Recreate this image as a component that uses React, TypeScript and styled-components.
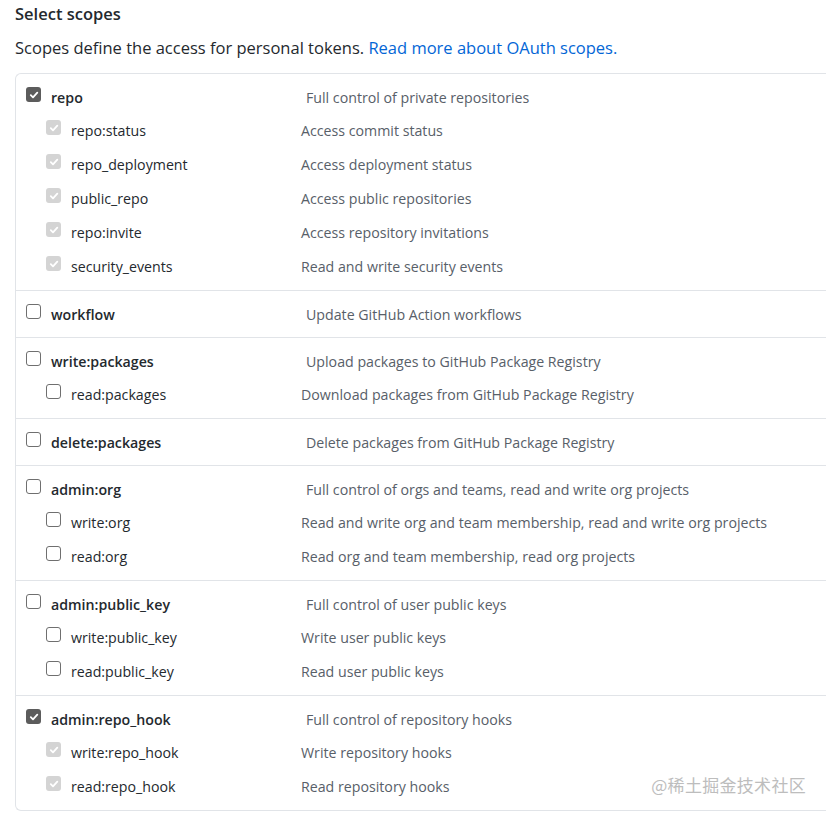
import React from "react";
import styled, { createGlobalStyle } from "styled-components";

const Global = createGlobalStyle`
  html, body { margin: 0; padding: 0; background: #fff; }
  body { font-family: "Open Sans", "Noto Sans", "Noto Sans CJK SC", sans-serif; color: #24292e; }
`;

const Page = styled.div`
  position: relative;
  width: 826px;
  height: 816px;
  overflow: hidden;
  padding-left: 15px;
  box-sizing: border-box;
`;

const Heading = styled.h3`
  margin: 0;
  padding-top: 2px;
  height: 26px;
  font-size: 16.5px;
  font-weight: 600;
  line-height: 24px;
  color: #24292e;
`;

const Intro = styled.p`
  margin: 0;
  height: 45px;
  line-height: 40px;
  font-size: 16.5px;
  color: #24292e;
  white-space: nowrap;
`;

const Link = styled.a`
  color: #0366d6;
  text-decoration: none;
`;

const Box = styled.div`
  border: 1px solid #e1e4e8;
  border-right: none;
  border-top-left-radius: 6px;
  border-bottom-left-radius: 6px;
  width: 830px;
`;

const Group = styled.div`
  padding: 6px 0;
  border-top: 1px solid #e1e4e8;
  &:first-child { border-top: none; }
`;

const Row = styled.div<{ $child?: boolean }>`
  display: grid;
  grid-template-columns: 14px ${(p) => (p.$child ? 219 : 244)}px 1fr;
  column-gap: 11px;
  align-items: center;
  height: 34px;
  padding-left: ${(p) => (p.$child ? 30 : 10)}px;
  padding-bottom: ${(p) => (p.$child ? 2 : 0)}px;
  box-sizing: border-box;
  font-size: 14.2px;
`;

const Box14 = styled.span<{ $state: "on" | "off" | "dim" }>`
  width: 15px;
  height: 15px;
  box-sizing: border-box;
  border-radius: 3px;
  margin-top: -5px;
  display: flex;
  align-items: center;
  justify-content: center;
  background: ${(p) => (p.$state === "on" ? "#5c5c5c" : p.$state === "dim" ? "#d4d4d4" : "#fff")};
  border: ${(p) => (p.$state === "off" ? "1px solid #6f6f6f" : "none")};
`;

const Label = styled.span<{ $child?: boolean }>`
  font-weight: ${(p) => (p.$child ? 400 : 600)};
  color: #24292e;
  white-space: nowrap;
`;

const Desc = styled.span`
  color: #586069;
  white-space: nowrap;
`;

const Watermark = styled.div`
  position: absolute;
  right: 20px;
  top: 772px;
  font-size: 17px;
  color: #bdbdbd;
  font-family: "Noto Sans CJK SC", sans-serif;
  letter-spacing: 0.3px;
`;

type State = "on" | "off" | "dim";

const Check = ({ state }: { state: State }) => (
  <Box14 $state={state}>
    {state !== "off" && (
      <svg width="10" height="10" viewBox="0 0 10 10">
        <path d="M1.8 5.2 L4 7.3 L8.3 2.6" fill="none" stroke="#fff" strokeWidth="1.8" strokeLinecap="round" strokeLinejoin="round" />
      </svg>
    )}
  </Box14>
);

type Item = { name: string; desc: string };
type G = { parent: Item; checked: boolean; children: Item[] };

const groups: G[] = [
  {
    parent: { name: "repo", desc: "Full control of private repositories" },
    checked: true,
    children: [
      { name: "repo:status", desc: "Access commit status" },
      { name: "repo_deployment", desc: "Access deployment status" },
      { name: "public_repo", desc: "Access public repositories" },
      { name: "repo:invite", desc: "Access repository invitations" },
      { name: "security_events", desc: "Read and write security events" },
    ],
  },
  { parent: { name: "workflow", desc: "Update GitHub Action workflows" }, checked: false, children: [] },
  {
    parent: { name: "write:packages", desc: "Upload packages to GitHub Package Registry" },
    checked: false,
    children: [{ name: "read:packages", desc: "Download packages from GitHub Package Registry" }],
  },
  { parent: { name: "delete:packages", desc: "Delete packages from GitHub Package Registry" }, checked: false, children: [] },
  {
    parent: { name: "admin:org", desc: "Full control of orgs and teams, read and write org projects" },
    checked: false,
    children: [
      { name: "write:org", desc: "Read and write org and team membership, read and write org projects" },
      { name: "read:org", desc: "Read org and team membership, read org projects" },
    ],
  },
  {
    parent: { name: "admin:public_key", desc: "Full control of user public keys" },
    checked: false,
    children: [
      { name: "write:public_key", desc: "Write user public keys" },
      { name: "read:public_key", desc: "Read user public keys" },
    ],
  },
  {
    parent: { name: "admin:repo_hook", desc: "Full control of repository hooks" },
    checked: true,
    children: [
      { name: "write:repo_hook", desc: "Write repository hooks" },
      { name: "read:repo_hook", desc: "Read repository hooks" },
    ],
  },
];

export default function App() {
  return (
    <Page>
      <Global />
      <Heading>Select scopes</Heading>
      <Intro>
        Scopes define the access for personal tokens. <Link href="#">Read more about OAuth scopes.</Link>
      </Intro>
      <Box>
        {groups.map((g) => (
          <Group key={g.parent.name}>
            <Row>
              <Check state={g.checked ? "on" : "off"} />
              <Label>{g.parent.name}</Label>
              <Desc>{g.parent.desc}</Desc>
            </Row>
            {g.children.map((c) => (
              <Row $child key={c.name}>
                <Check state={g.checked ? "dim" : "off"} />
                <Label $child>{c.name}</Label>
                <Desc>{c.desc}</Desc>
              </Row>
            ))}
          </Group>
        ))}
      </Box>
      <Watermark>@稀土掘金技术社区</Watermark>
    </Page>
  );
}
